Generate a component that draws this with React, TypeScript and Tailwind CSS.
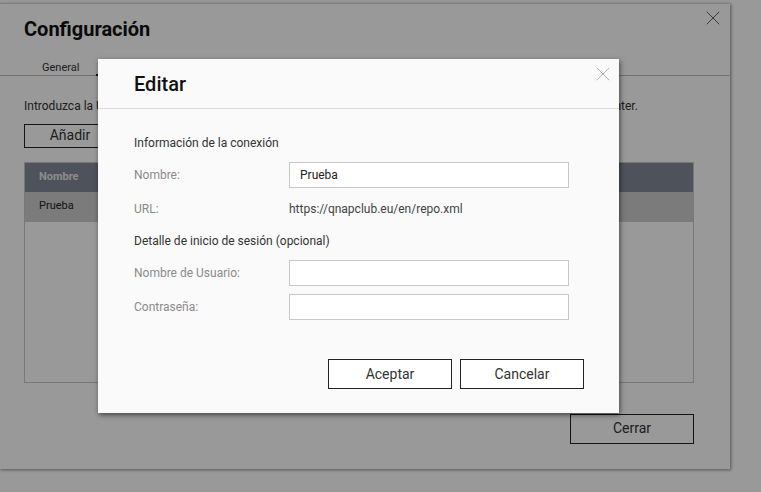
import { X } from "lucide-react";

const font = { fontFamily: "Roboto, 'Open Sans', sans-serif" };

function Field({ label, value }: { label: string; value?: string }) {
  return (
    <div className="flex h-[26px] items-center">
      <span className="w-[155px] text-[12px] text-[#8a8a8a]">{label}</span>
      <div className="flex h-[26px] w-[280px] items-center border border-[#c8c8c8] bg-white px-[10px] text-[12px] text-[#222]">
        {value}
      </div>
    </div>
  );
}

function EditDialog() {
  return (
    <div className="absolute left-[98px] top-[59px] flex h-[354px] w-[521px] flex-col bg-[#fafafa] shadow-[1px_2px_5px_rgba(0,0,0,0.55)]">
      <div className="relative flex h-[50px] items-center border-b border-[#dcdcdc] pl-[36px]">
        <h2 className="text-[20px] font-medium text-[#111]">Editar</h2>
        <X className="absolute right-[4px] top-[3px] h-[24px] w-[24px] text-[#a0a0a0]" strokeWidth={0.8} />
      </div>
      <div className="flex flex-col px-[36px] pt-[24px]">
        <div className="flex h-[20px] items-center text-[12px] text-[#333]">Información de la conexión</div>
        <div className="mt-[9px]">
          <Field label="Nombre:" value="Prueba" />
        </div>
        <div className="mt-[8px] flex h-[26px] items-center text-[12px]">
          <span className="w-[155px] text-[#8a8a8a]">URL:</span>
          <span className="text-[#444]">https://qnapclub.eu/en/repo.xml</span>
        </div>
        <div className="mt-[9px] flex h-[20px] items-center text-[12px] text-[#333]">
          Detalle de inicio de sesión (opcional)
        </div>
        <div className="mt-[9px]">
          <Field label="Nombre de Usuario:" />
        </div>
        <div className="mt-[8px]">
          <Field label="Contraseña:" />
        </div>
        <div className="mt-[39px] flex justify-end gap-[8px]">
          <button className="h-[30px] w-[124px] border border-[#222] bg-white text-[14px] text-[#333]">Aceptar</button>
          <button className="mr-[-1px] h-[30px] w-[124px] border border-[#222] bg-white text-[14px] text-[#333]">Cancelar</button>
        </div>
      </div>
    </div>
  );
}

function ConfigWindow() {
  return (
    <div className="absolute left-[-1px] top-[3px] flex h-[466px] w-[731px] flex-col border-t border-[#d6d6d6] bg-white shadow-[1px_1px_3px_rgba(0,0,0,0.45)]">
      <div className="relative flex h-[49px] items-center pl-[25px]">
        <h1 className="text-[20px] font-bold text-[#111]">Configuración</h1>
        <X className="absolute right-[5px] top-[2px] h-[24px] w-[24px] text-[#555]" strokeWidth={0.9} />
      </div>
      <div className="flex h-[23px] items-end border-b border-[#bcbcbc] pl-[43px]">
        <span className="text-[11px] leading-[15px] text-[#333]">General</span>
        <span className="ml-[17px] h-[2px] w-[60px] translate-y-[1px] bg-[#222]" />
      </div>
      <div className="flex flex-col px-[25px]">
        <p className="mt-[21px] whitespace-nowrap text-[12px] text-[#333]">
          Introduzca la URL del repositorio de aplicaciones de terceros que desea añadir en la lista de fuentes del App Center.
        </p>
        <div className="mt-[8px]">
          <button className="h-[24px] w-[92px] border border-[#222] bg-white text-[14px] text-[#333]">Añadir</button>
        </div>
        <div className="mt-[14px] flex h-[221px] w-[670px] flex-col border border-[#c8c8c8]">
          <div className="flex h-[29px] items-center bg-[#838996] pl-[14px] text-[11px] font-bold text-[#e8e8e8]">Nombre</div>
          <div className="flex h-[30px] items-center bg-[#cdcdcd] pl-[14px] text-[11px] text-[#222]">Prueba</div>
        </div>
        <div className="mt-[31px] flex w-[670px] justify-end">
          <button className="h-[30px] w-[124px] border border-[#222] bg-white text-[14px] text-[#333]">Cerrar</button>
        </div>
      </div>
    </div>
  );
}

export default function App() {
  return (
    <div className="relative h-[492px] w-[761px] overflow-hidden bg-white" style={font}>
      <ConfigWindow />
      <div className="absolute inset-0 bg-black/40" />
      <EditDialog />
    </div>
  );
}
